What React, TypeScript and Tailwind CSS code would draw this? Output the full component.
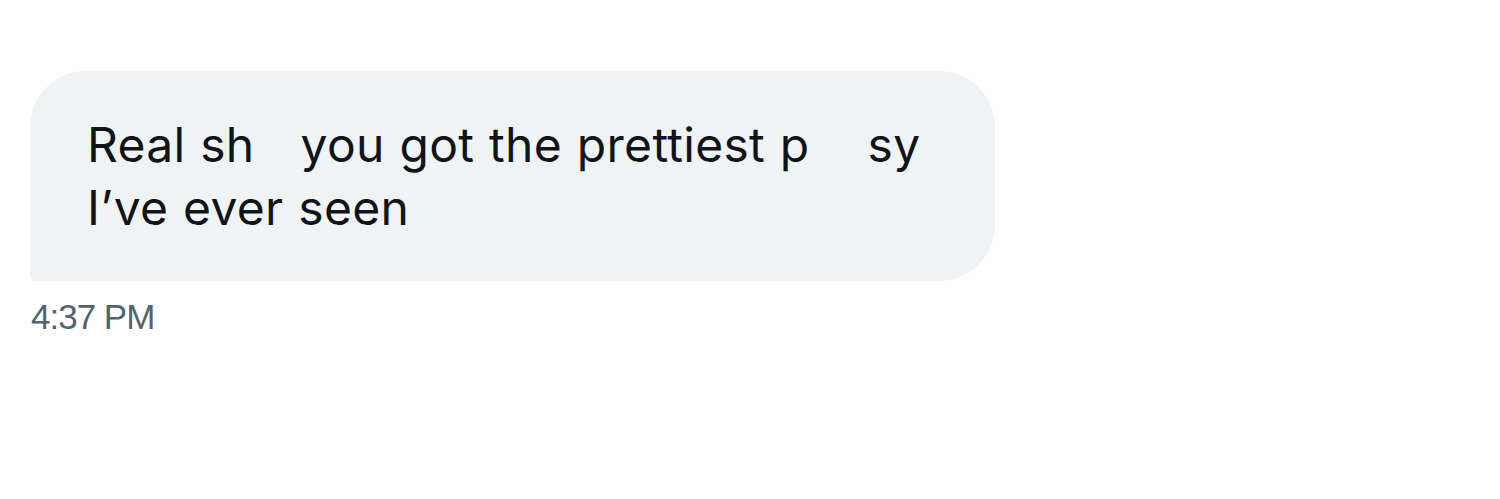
export default function App() {
  return (
    <div className="h-[499px] w-[1500px] bg-[#fefefe] pl-[30px] pt-[71px]">
      <div className="w-[965px] rounded-[56px] rounded-bl-[6px] bg-[#eff3f4] pb-[42px] pl-[57px] pr-[40px] pt-[42px] font-['Inter',sans-serif] text-[48px] leading-[63px] tracking-[0.3px] text-[#0f1419] [word-spacing:1px]">
        <p>
          Real sh<span className="inline-block w-[46px]" />you got the prettiest p
          <span className="inline-block w-[58px]" />sy
          <br />
          I’ve ever seen
        </p>
      </div>
      <div className="mt-[18px] pl-px font-['Liberation_Sans',sans-serif] text-[35px] leading-[35px] tracking-[-1px] text-[#536471]">
        4:37 PM
      </div>
    </div>
  );
}
